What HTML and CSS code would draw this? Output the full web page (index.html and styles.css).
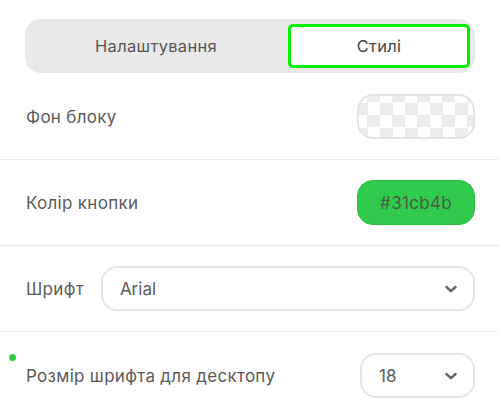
FILE: index.html
```html
<!DOCTYPE html>
<html lang="uk">
<head>
    <meta charset="UTF-8">
    <title>Стилі</title>
    <link rel="stylesheet" href="styles.css">
</head>
<body>

    <div id="panel">
        <div class="tabs">
            <div class="tab">Налаштування</div>
            <div class="tab active">Стилі</div>
        </div>

        <div class="row first">
            <span class="label">Фон блоку</span>
            <div class="swatch checker"></div>
        </div>

        <div class="row">
            <span class="label">Колір кнопки</span>
            <div class="swatch color">#31cb4b</div>
        </div>

        <div class="row">
            <span class="label">Шрифт</span>
            <div class="select wide">
                <span>Arial</span>
                <svg class="chev" width="12" height="10" viewBox="0 0 12 10"><path d="M1.5 3 L6 7.2 L10.5 3" fill="none" stroke="#666" stroke-width="2.4" stroke-linecap="round" stroke-linejoin="round"/></svg>
            </div>
        </div>

        <div class="row last">
            <i class="dot"></i>
            <span class="label">Розмір шрифта для десктопу</span>
            <div class="select small">
                <span>18</span>
                <svg class="chev" width="12" height="10" viewBox="0 0 12 10"><path d="M1.5 3 L6 7.2 L10.5 3" fill="none" stroke="#666" stroke-width="2.4" stroke-linecap="round" stroke-linejoin="round"/></svg>
            </div>
        </div>
    </div>

</body>
</html>
```

FILE: styles.css
```css
*{margin: 0;padding: 0;box-sizing: border-box;}
body{font-size: 17px; font-family: Inter, "Liberation Sans", sans-serif; color: #5a5a5a; background: #fff;}

#panel{width: 500px; padding-top: 19px;}

.tabs{display: flex; margin: 0 25px; height: 54px; padding: 5px; background: #e9e9e9; border-radius: 16px;}
.tab{flex: 1; display: flex; align-items: center; justify-content: center; font-size: 16.5px; letter-spacing: 0.3px; color: #555; border-radius: 5px;}
.tab:first-child{padding-right: 6px;}
.tab.active{flex: 0 0 182px; background: #fff; border: 3px solid #00f000; color: #444;}

.row{position: relative; display: flex; align-items: center; gap: 12px; padding: 20px 25px 20px 26px; border-bottom: 1px solid #ebebeb;}
.row.first{padding-top: 21px;}
.row.last{border-bottom: 0; padding-top: 21px;}
.label{flex: 1; white-space: nowrap; letter-spacing: 0.3px;}

.swatch{width: 118px; height: 45px; border-radius: 16px; flex: none;}
.checker{border: 2px solid #e4e4e4; background-color: #fff; background-image: conic-gradient(#ececec 25%, #fff 0 50%, #ececec 0 75%, #fff 0); background-size: 25px 25px; background-position: -4px -6px;}
.color{background: #31cb4b; border: 1px solid #2bbb43; display: flex; align-items: center; justify-content: center; color: #4a5a4c; letter-spacing: 0.3px;}

.select{display: flex; align-items: center; height: 45px; border: 2px solid #e6e6e6; border-radius: 16px; padding: 0 16px 0 17px; flex: none;}
.select span{flex: 1;}
.select.wide{flex: 1; margin-left: 5px;}
.row:nth-child(4) .label{flex: none;}
.select.small{width: 115px;}
.chev{display: block;}

.dot{position: absolute; left: 9px; top: 22px; width: 7px; height: 7px; border-radius: 50%; background: #2ecc40;}
```
